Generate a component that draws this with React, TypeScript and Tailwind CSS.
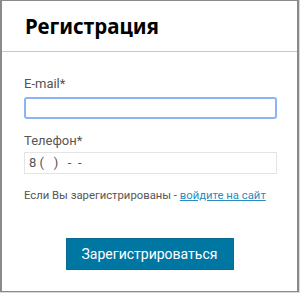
export default function App() {
  return (
    <div className="h-[293px] w-[300px] overflow-hidden bg-[#d9d9d9]">
      <div
        className="flex h-[292px] w-[299px] flex-col border-t border-l-2 border-r-2 border-b border-[#8a8a8a] bg-white"
        style={{ fontFamily: '"Noto Sans", "Open Sans", sans-serif' }}
      >
        <div className="flex h-[51px] items-center border-b border-[#c8c8c8] px-[23px]">
          <h1 className="text-[20.5px] font-bold leading-none text-black">Регистрация</h1>
        </div>

        <form className="flex flex-col px-[22px] pt-[24px] font-['Roboto',sans-serif]">
          <label className="text-[13px] leading-[16px] text-[#555]">E-mail*</label>
          <input
            type="text"
            className="mt-[5px] h-[22px] w-[253px] rounded-[3px] border-2 border-[#8ab4f8] bg-white px-2 text-[13px] outline-none"
          />
          <label className="mt-[14px] text-[13px] leading-[16px] text-[#555]">Телефон*</label>
          <div className="mt-[3px] flex h-[22px] w-[253px] items-center border border-[#e4e4e4] bg-white px-[4px] text-[13px] text-[#555]">
            8 (&nbsp;&nbsp;&nbsp;)&nbsp;&nbsp;&nbsp;-&nbsp;&nbsp;-
          </div>
          <p className="mt-[14px] whitespace-nowrap text-[11.3px] leading-[16px] text-[#555]">
            Если Вы зарегистрированы -{" "}
            <a href="#" className="text-[#2a8cc0] underline">
              войдите на сайт
            </a>
          </p>
          <div className="mt-[34px] flex justify-center">
            <button
              type="button"
              className="h-[32px] w-[168px] border border-[#0a6a90] bg-[#0077a3] text-[14px] text-white"
            >
              Зарегистрироваться
            </button>
          </div>
        </form>
      </div>
    </div>
  );
}
